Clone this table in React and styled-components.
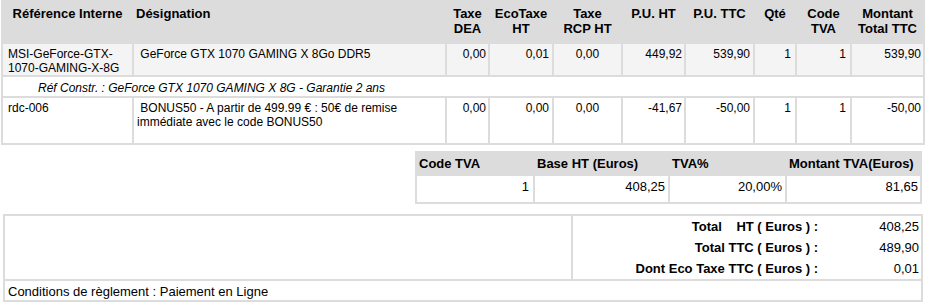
import { Fragment } from "react";
import { createGlobalStyle, styled } from "styled-components";

const GlobalStyle = createGlobalStyle`
body {
  margin: 0;
  background: #ffffff;
  font-family: "Liberation Sans", Arial, sans-serif;
  color: #000000;
}
`;

const Page = styled.div`
display: flex;
flex-direction: column;
width: 926px;
`;

const Table = styled.table`
border-collapse: separate;
border-spacing: 2px;
background-color: #dcdcdc;
table-layout: fixed;
width: ${(p) => p.$w}px;
margin: ${(p) => p.$m};
`;

const Col = styled.col`
width: ${(p) => p.$w}px;
`;

const Row = styled.tr`
height: ${(p) => p.$h}px;
`;

const Th = styled.th`
background-color: #dcdcdc;
font-size: 13px;
font-weight: bold;
line-height: 15px;
vertical-align: ${(p) => p.$valign || "top"};
text-align: ${(p) => p.$align || "center"};
padding: ${(p) => p.$pad || "4px 2px 0 2px"};
overflow: hidden;
`;

const Td = styled.td`
background-color: ${(p) => p.$bg || "#ffffff"};
font-size: ${(p) => p.$size || 12}px;
line-height: ${(p) => (p.$size === 13 ? 15 : 14)}px;
vertical-align: top;
text-align: ${(p) => p.$align || "left"};
padding: ${(p) => p.$pad || "3px 3px 0 3px"};
overflow: hidden;
`;

const NoteCell = styled.td`
background-color: #ffffff;
font-size: 12px;
line-height: 14px;
font-style: italic;
vertical-align: top;
padding: 4px 3px 0 35px;
`;

const TotalsGrid = styled.div`
display: grid;
grid-template-columns: 1fr 101px;
grid-auto-rows: 21px;
padding: 0 2px 0 0;
font-size: 13px;
line-height: 21px;
`;

const TotalLabel = styled.div`
font-weight: bold;
text-align: right;
white-space: pre;
`;

const TotalValue = styled.div`
text-align: right;
`;

const mainCols = [129, 311, 41, 62, 67, 61, 67, 40, 53, 71];

const lines = [
  {
    ref: "MSI-GeForce-GTX-1070-GAMING-X-8G",
    des: "\u00a0GeForce GTX 1070 GAMING X 8Go DDR5",
    dea: "0,00",
    eco: "0,01",
    rcp: "0,00",
    puht: "449,92",
    puttc: "539,90",
    qte: "1",
    code: "1",
    total: "539,90",
    bg: "#f4f4f4",
    h: 30,
    note: "Réf Constr. : GeForce GTX 1070 GAMING X 8G - Garantie 2 ans",
  },
  {
    ref: "rdc-006",
    des: "\u00a0BONUS50 - A partir de 499.99 € : 50€ de remise immédiate avec le code BONUS50",
    dea: "0,00",
    eco: "0,00",
    rcp: "0,00",
    puht: "-41,67",
    puttc: "-50,00",
    qte: "1",
    code: "1",
    total: "-50,00",
    bg: "#ffffff",
    h: 45,
  },
];

const totals = [
  ["Total\u00a0\u00a0\u00a0 HT ( Euros ) :", "408,25"],
  ["Total TTC ( Euros ) :", "489,90"],
  ["Dont Eco Taxe TTC ( Euros ) :", "0,01"],
];

export default function App() {
  return (
    <Page>
      <GlobalStyle />
      <Table $w={924} $m="0 0 0 1px">
        <colgroup>
          {mainCols.map((w, i) => (
            <Col key={i} $w={w} />
          ))}
        </colgroup>
        <thead>
          <Row $h={40}>
            <Th>Référence Interne</Th>
            <Th $align="left">Désignation</Th>
            <Th>Taxe DEA</Th>
            <Th>EcoTaxe HT</Th>
            <Th>
              Taxe
              <br />
              RCP HT
            </Th>
            <Th>P.U. HT</Th>
            <Th>P.U. TTC</Th>
            <Th>Qté</Th>
            <Th>Code TVA</Th>
            <Th>Montant Total TTC</Th>
          </Row>
        </thead>
        <tbody>
          {lines.map((l) => (
            <Fragment key={l.ref}>
              <Row $h={l.h}>
                <Td $bg={l.bg} $pad="3px 3px 0 5px">{l.ref}</Td>
                <Td $bg={l.bg}>{l.des}</Td>
                <Td $bg={l.bg} $align="right" $pad="3px 2px 0 0">{l.dea}</Td>
                <Td $bg={l.bg} $align="right">{l.eco}</Td>
                <Td $bg={l.bg} $align="center">{l.rcp}</Td>
                <Td $bg={l.bg} $align="right" $pad="3px 2px 0 0">{l.puht}</Td>
                <Td $bg={l.bg} $align="right">{l.puttc}</Td>
                <Td $bg={l.bg} $align="right" $pad="3px 4px 0 0">{l.qte}</Td>
                <Td $bg={l.bg} $align="right" $pad="3px 4px 0 0">{l.code}</Td>
                <Td $bg={l.bg} $align="right" $pad="3px 2px 0 0">{l.total}</Td>
              </Row>
              {l.note && (
                <Row $h={19}>
                  <NoteCell colSpan={10}>{l.note}</NoteCell>
                </Row>
              )}
            </Fragment>
          ))}
        </tbody>
      </Table>

      <Table $w={507} $m="6px 4px 0 auto">
        <colgroup>
          <Col $w={116} />
          <Col $w={133} />
          <Col $w={115} />
          <Col $w={133} />
        </colgroup>
        <tbody>
          <Row $h={21}>
            <Th $align="left" $valign="middle" $pad="0 2px">Code TVA</Th>
            <Th $align="left" $valign="middle" $pad="0 2px">Base HT (Euros)</Th>
            <Th $align="left" $valign="middle" $pad="0 2px">TVA%</Th>
            <Th $align="left" $valign="middle" $pad="0 2px">Montant TVA(Euros)</Th>
          </Row>
          <Row $h={26}>
            <Td $size={13} $align="right" $pad="3px 4px 0 0">1</Td>
            <Td $size={13} $align="right" $pad="3px 3px 0 0">408,25</Td>
            <Td $size={13} $align="right" $pad="3px 3px 0 0">20,00%</Td>
            <Td $size={13} $align="right" $pad="3px 2px 0 0">81,65</Td>
          </Row>
        </tbody>
      </Table>

      <Table $w={920} $m="10px 0 0 3px">
        <colgroup>
          <Col $w={566} />
          <Col $w={348} />
        </colgroup>
        <tbody>
          <Row $h={63}>
            <Td />
            <Td $pad="0">
              <TotalsGrid>
                {totals.map(([label, value]) => (
                  <Fragment key={label}>
                    <TotalLabel>{label}</TotalLabel>
                    <TotalValue>{value}</TotalValue>
                  </Fragment>
                ))}
              </TotalsGrid>
            </Td>
          </Row>
          <Row $h={19}>
            <Td colSpan={2} $size={13} $pad="3px 3px 0 3px">
              Conditions de règlement : Paiement en Ligne
            </Td>
          </Row>
        </tbody>
      </Table>
    </Page>
  );
}
